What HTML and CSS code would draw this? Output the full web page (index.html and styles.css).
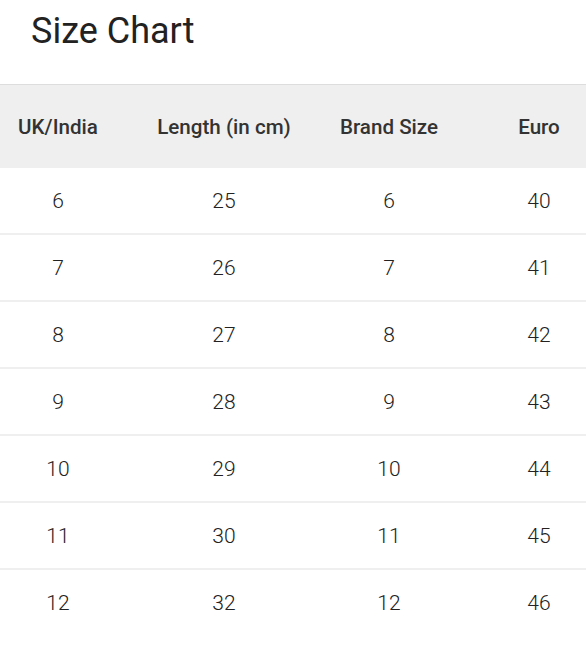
FILE: index.html
```html
<!DOCTYPE html>
<html lang="en">
<head>
<meta charset="utf-8">
<title>Size Chart</title>
<link rel="stylesheet" href="styles.css">
</head>
<body>
<div class="page">
  <h1 class="title">Size Chart</h1>
  <div class="table-wrap">
    <table class="chart">
      <colgroup>
        <col class="c1"><col class="c2"><col class="c3"><col class="c4">
      </colgroup>
      <thead>
        <tr><th>UK/India</th><th>Length (in cm)</th><th>Brand Size</th><th>Euro</th></tr>
      </thead>
      <tbody>
        <tr><td>6</td><td>25</td><td>6</td><td>40</td></tr>
        <tr><td>7</td><td>26</td><td>7</td><td>41</td></tr>
        <tr><td>8</td><td>27</td><td>8</td><td>42</td></tr>
        <tr><td>9</td><td>28</td><td>9</td><td>43</td></tr>
        <tr><td>10</td><td>29</td><td>10</td><td>44</td></tr>
        <tr><td>11</td><td>30</td><td>11</td><td>45</td></tr>
        <tr><td>12</td><td>32</td><td>12</td><td>46</td></tr>
      </tbody>
    </table>
  </div>
</div>
</body>
</html>
```
FILE: styles.css
```css
html, body {
  margin: 0;
  padding: 0;
  background: #ffffff;
}
body {
  font-family: Roboto, "Noto Sans", sans-serif;
  color: #333333;
}
.page {
  width: 586px;
  overflow: hidden;
}
.title {
  margin: 0;
  padding: 10px 0 0 31px;
  height: 84px;
  box-sizing: border-box;
  font-size: 36px;
  font-weight: 400;
  line-height: 42px;
  color: #222222;
}
.table-wrap {
  overflow: hidden;
  width: 586px;
}
.chart {
  border-collapse: collapse;
  table-layout: fixed;
  width: 632px;
}
.c1 { width: 116px; }
.c2 { width: 216px; }
.c3 { width: 114px; }
.c4 { width: 186px; }
.chart thead tr {
  background: #efefef;
  border-top: 1px solid #dddddd;
}
.chart th {
  height: 83px;
  padding: 0;
  font-size: 20.6px;
  font-weight: 500;
  color: #333333;
  text-align: center;
  vertical-align: middle;
}
.chart td {
  height: 65px;
  padding: 0;
  font-size: 21px;
  font-weight: 300;
  color: #222222;
  text-align: center;
  vertical-align: middle;
}
.chart tbody tr + tr {
  border-top: 2px solid #efefef;
}
```
